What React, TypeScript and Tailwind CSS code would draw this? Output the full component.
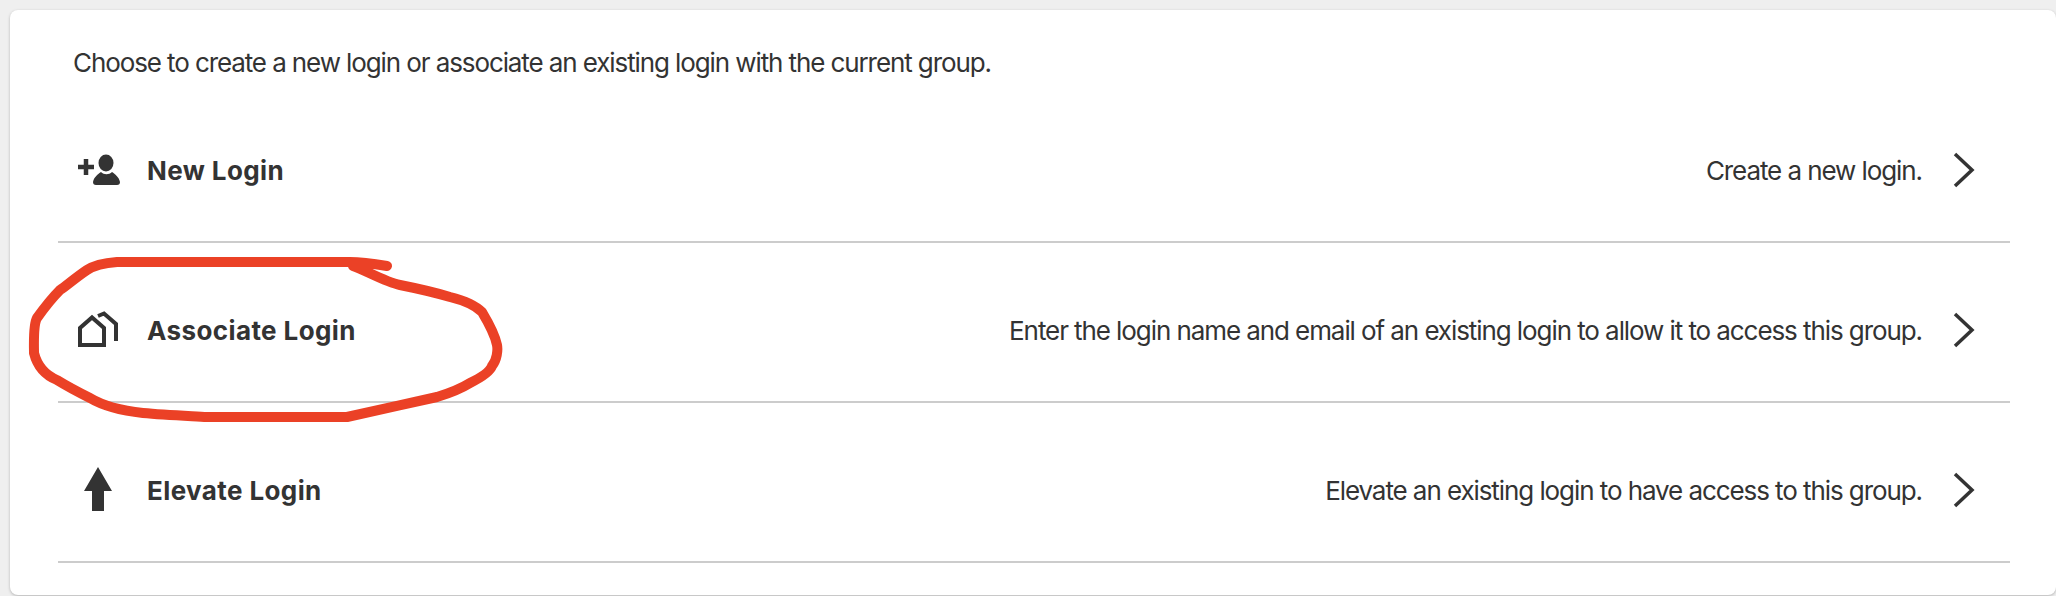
import React from "react";

const rows = [
  {
    title: "New Login",
    text: "Create a new login.",
    icon: (
      <>
        <path d="M4 21H20M12 13V29" fill="none" stroke="#333" strokeWidth="4.5" />
        <ellipse cx="32" cy="17" rx="7.5" ry="8.5" fill="#333" />
        <path d="M19 36C20 31 24 28 27 26C30 29 35 29 38 26C41 28 45 31 46 36C46 38 45 39 43 39H22C20 39 19 38 19 36Z" fill="#333" />
      </>
    ),
  },
  {
    title: "Associate Login",
    text: "Enter the login name and email of an existing login to allow it to access this group.",
    icon: (
      <>
        <path d="M6 39V22L18 11.5L30 22V39Z" fill="none" stroke="#333" strokeWidth="4" />
        <path d="M24 10L30 7.5L42 18V35" fill="none" stroke="#333" strokeWidth="4" />
      </>
    ),
  },
  {
    title: "Elevate Login",
    text: "Elevate an existing login to have access to this group.",
    icon: <path d="M24 1L38 25H30V45H18V25H10Z" fill="#333" />,
  },
];

export default function App() {
  return (
    <div className="relative h-[596px] w-full overflow-hidden bg-[#efefef] pl-[10px] pt-[10px] font-['Inter',sans-serif] text-[#333]">
      <div className="h-[585px] rounded-lg bg-white pl-12 pr-[46px] shadow-[0_1px_3px_rgba(0,0,0,0.25)]">
        <p className="flex h-[73px] items-center pl-[15px] pt-[31px] text-[26px] tracking-[-1.1px]">
          Choose to create a new login or associate an existing login with the current group.
        </p>
        {rows.map((r) => (
          <div key={r.title} className="flex h-[160px] items-center border-b-2 border-[#cccccc] pl-4 pr-[34px] pt-4">
            <svg viewBox="0 0 48 48" className="h-12 w-12 shrink-0">
              {r.icon}
            </svg>
            <span className="ml-[25px] text-[26px] font-bold tracking-[0.4px]">{r.title}</span>
            <span className="ml-auto text-[26px] tracking-[-1.08px]">{r.text}</span>
            <svg viewBox="0 0 24 40" className="ml-[30px] h-10 w-6 shrink-0">
              <path d="M3 4L20 20L3 36" fill="none" stroke="#333" strokeWidth="3.5" />
            </svg>
          </div>
        ))}
      </div>
      <svg className="pointer-events-none absolute left-0 top-0" width="2056" height="596" viewBox="0 0 2056 596">
        <path
          d="M387 266C375 264 360 262 350 262L117 262C105 263 93 266 87 270C75 278 65 287 60 290C52 298 42 311 37 318C33 325 34 345 34 353C37 365 45 375 57 380C70 388 78 392 90 398C105 407 125 411 143 413C165 415 190 416 207 417L347 417C370 412 410 403 437 397C450 393 462 388 470 383C480 378 490 372 492 366C497 360 498 350 497 345C495 335 488 322 482 312C475 305 462 300 450 297C430 291 410 287 400 285C385 282 365 270 353 266"
          fill="none"
          stroke="#eb4126"
          strokeWidth="10"
          strokeLinecap="round"
          strokeLinejoin="round"
        />
      </svg>
    </div>
  );
}
